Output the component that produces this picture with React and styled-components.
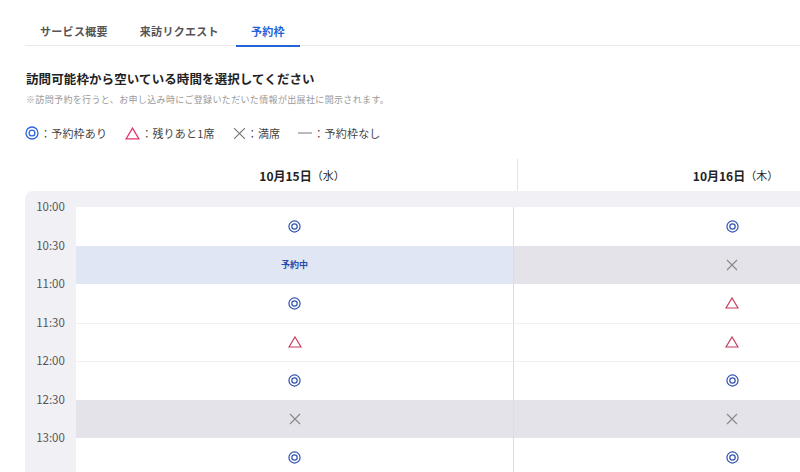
import React from "react";
import styled, { createGlobalStyle } from "styled-components";

const GlobalStyle = createGlobalStyle`
  body {
    margin: 0;
    background: #ffffff;
    font-family: "Noto Sans CJK JP", "Noto Sans", sans-serif;
    color: #333;
    overflow: hidden;
  }
`;

const Page = styled.div`
  padding-left: 25px;
  width: 775px;
  overflow: hidden;
`;

const Tabs = styled.div`
  display: flex;
  gap: 2px;
  height: 46px;
  box-sizing: border-box;
  border-bottom: 1.5px solid #e8e8ee;
`;

const Tab = styled.div`
  display: flex;
  align-items: flex-end;
  padding: 0 15px 6px;
  font-size: 11px;
  line-height: 16px;
  font-weight: 700;
  letter-spacing: 0.3px;
  color: ${(p) => (p.$active ? "#2563d8" : "#555")};
  border-bottom: 2px solid ${(p) => (p.$active ? "#2563d8" : "transparent")};
  margin-bottom: -1.5px;
`;

const Title = styled.h2`
  margin: 24px 0 0 1px;
  font-size: 12.5px;
  line-height: 18px;
  font-weight: 700;
  color: #222;
  letter-spacing: 0.1px;
`;

const Note = styled.p`
  margin: 5px 0 0 1px;
  font-size: 9px;
  line-height: 13px;
  color: #999;
  letter-spacing: 0.35px;
`;

const Legend = styled.div`
  display: flex;
  align-items: center;
  gap: 18px;
  height: 16px;
  margin-top: 19px;
  font-size: 11px;
  line-height: 16px;
  color: #444;
`;

const LegendItem = styled.div`
  display: flex;
  align-items: center;
  gap: 1px;
  letter-spacing: 0.2px;
`;

const HeaderRow = styled.div`
  display: grid;
  grid-template-columns: 62px 430px 436px;
  height: 32px;
  margin-top: 18px;
`;

const DateCell = styled.div`
  display: flex;
  align-items: center;
  justify-content: center;
  font-size: 12px;
  font-weight: 700;
  color: #222;
  border-left: ${(p) => (p.$divider ? "1px solid #e2e2ea" : "none")};
`;

const Weekday = styled.span`
  font-weight: 400;
  font-size: 11px;
`;

const Table = styled.div`
  width: 925px;
  background: #f0f0f5;
  border-top-left-radius: 8px;
  padding-top: 16px;
`;

const Row = styled.div`
  display: grid;
  grid-template-columns: 51px 437px 437px;
  height: 38.5px;
`;

const TimeLabel = styled.div`
  font-size: 11.5px;
  color: #555;
  text-align: center;
  line-height: 14px;
  transform: translateY(-8px);
`;

const Slot = styled.div`
  display: flex;
  align-items: center;
  justify-content: center;
  background: ${(p) =>
    p.$kind === "booked" ? "#e1e6f4" : p.$kind === "full" ? "#e3e3e9" : "#ffffff"};
  border-top: ${(p) =>
    p.$first || p.$kind === "full" || p.$kind === "booked" || p.$afterShade
      ? "none"
      : "1px solid #f0f0f5"};
  border-left: ${(p) => (p.$divider ? "1px solid #dcdce6" : "none")};
  box-sizing: border-box;
`;

const Booked = styled.span`
  font-size: 9px;
  font-weight: 700;
  color: #2a4aa8;
`;

function Circle({ color = "#3151b0", size = 13 }) {
  return (
    <svg width={size} height={size} viewBox="0 0 14 14">
      <circle cx="7" cy="7" r="6" fill="none" stroke={color} strokeWidth="1.3" />
      <circle cx="7" cy="7" r="2.9" fill="none" stroke={color} strokeWidth="1.3" />
    </svg>
  );
}

function Triangle({ color = "#c83a5c", size = 14 }) {
  return (
    <svg width={size} height={size - 2} viewBox="0 0 14 12">
      <path d="M7 1 L13 11 L1 11 Z" fill="none" stroke={color} strokeWidth="1.2" />
    </svg>
  );
}

function Cross({ color = "#888", size = 12 }) {
  return (
    <svg width={size} height={size} viewBox="0 0 12 12">
      <path d="M1 1 L11 11 M11 1 L1 11" stroke={color} strokeWidth="1.1" />
    </svg>
  );
}

function Dash({ color = "#777" }) {
  return (
    <svg width="14" height="12" viewBox="0 0 14 12">
      <path d="M0 6 H14" stroke={color} strokeWidth="1" />
    </svg>
  );
}

const times = ["10:00", "10:30", "11:00", "11:30", "12:00", "12:30", "13:00"];
const day1 = ["ok", "booked", "ok", "few", "ok", "full", "ok"];
const day2 = ["ok", "full", "few", "few", "ok", "full", "ok"];

function SlotMark({ kind }) {
  if (kind === "ok") return <Circle />;
  if (kind === "few") return <Triangle />;
  if (kind === "full") return <Cross />;
  if (kind === "booked") return <Booked>予約中</Booked>;
  return <Dash />;
}

const isShaded = (k) => k === "full" || k === "booked";

export default function App() {
  return (
    <Page>
      <GlobalStyle />
      <Tabs>
        <Tab>サービス概要</Tab>
        <Tab>来訪リクエスト</Tab>
        <Tab $active>予約枠</Tab>
      </Tabs>
      <Title>訪問可能枠から空いている時間を選択してください</Title>
      <Note>※訪問予約を行うと、お申し込み時にご登録いただいた情報が出展社に開示されます。</Note>
      <Legend>
        <LegendItem>
          <Circle color="#2b66dc" size={14} />：予約枠あり
        </LegendItem>
        <LegendItem>
          <Triangle color="#e0356b" size={15} />：残りあと1席
        </LegendItem>
        <LegendItem>
          <Cross color="#777" size={13} />：満席
        </LegendItem>
        <LegendItem>
          <Dash />：予約枠なし
        </LegendItem>
      </Legend>
      <HeaderRow>
        <div />
        <DateCell>
          10月15日<Weekday>（水）</Weekday>
        </DateCell>
        <DateCell $divider>
          10月16日<Weekday>（木）</Weekday>
        </DateCell>
      </HeaderRow>
      <Table>
        {times.map((t, i) => (
          <Row key={t}>
            <TimeLabel>{t}</TimeLabel>
            <Slot $kind={day1[i]} $first={i === 0} $afterShade={i > 0 && isShaded(day1[i - 1])}>
              <SlotMark kind={day1[i]} />
            </Slot>
            <Slot $kind={day2[i]} $divider $first={i === 0} $afterShade={i > 0 && isShaded(day2[i - 1])}>
              <SlotMark kind={day2[i]} />
            </Slot>
          </Row>
        ))}
      </Table>
    </Page>
  );
}
